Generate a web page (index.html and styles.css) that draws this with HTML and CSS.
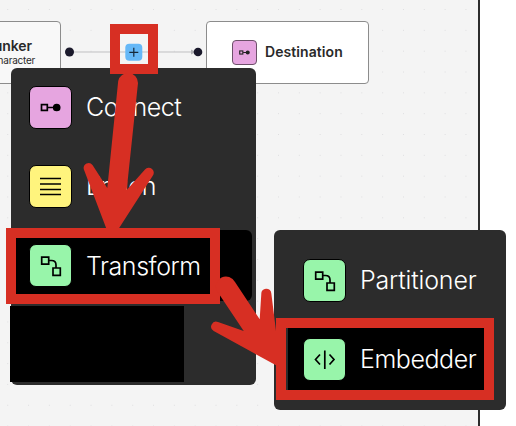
FILE: index.html
```html
<!DOCTYPE html>
<html lang="en">
<head>
<meta charset="utf-8">
<title>Workflow editor</title>
<link rel="stylesheet" href="styles.css">
</head>
<body>
<main class="screen">
  <section class="canvas">
    <div class="node chunker"><strong>unker</strong><span>haracter</span></div>
    <svg class="edge" width="140" height="20" viewBox="0 0 140 20">
      <path d="M8 10H130" stroke="#bfbfc1"/>
      <path d="M126 7.5L131 10L126 12.5Z" fill="#b4b4b7"/>
      <circle cx="4.5" cy="10" r="4.5" fill="#1a192b"/><circle cx="133" cy="10" r="4.3" fill="#1a192b"/>
      <rect x="60.3" y="1.8" width="17" height="17" rx="4" fill="#66b8f7"/>
      <path d="M64.3 10.3H73.3M68.8 5.8V14.8" stroke="#172a3a" stroke-width="1.2"/>
    </svg>
    <div class="node destination">
      <svg class="small-icon" viewBox="0 0 25 25" width="25" height="25">
        <g fill="none" stroke="#222" stroke-width="1.2"><rect x="7.3" y="10.8" width="3.4" height="3.4"/><path d="M11 12.5H15"/></g><circle cx="16" cy="12.5" r="2.2" fill="#222"/>
      </svg>
      <strong>Destination</strong>
    </div>
  </section>

  <nav class="menu primary">
    <div class="row">
      <svg class="icon pink" viewBox="0 0 41 41"><rect x="11.5" y="17.6" width="5.8" height="5.8"/><path d="M17 20.5H25"/><circle cx="26.7" cy="20.5" r="3" fill="#000"/></svg>
      <span class="connect">Connect</span>
    </div>
    <div class="row">
      <svg class="icon yellow" viewBox="0 0 41 41"><path d="M10 12.5H31M10 18H31M10 23.5H31M10 28.5H31"/></svg>
      <span class="enrich">Enrich</span>
    </div>
    <div class="row active">
      <svg class="icon green" viewBox="0 0 41 41"><path d="M11.7 12.2h7v7h-7zM23 23h7.3v7.3H23zM19 15.5h2.5q4.5 0 4.5 4.5v3"/></svg>
      <span class="transform">Transform</span>
    </div>
  </nav>
  <div class="redaction"></div>

  <nav class="menu secondary">
    <div class="row">
      <svg class="icon green" viewBox="0 0 41 41"><path d="M11.7 12.2h7v7h-7zM23 23h7.3v7.3H23zM19 15.5h2.5q4.5 0 4.5 4.5v3"/></svg>
      <span class="partitioner">Partitioner</span>
    </div>
    <div class="row active">
      <svg class="icon green" viewBox="0 0 41 41"><path d="M16 15.5L11.5 20.5L16 25.5M25.5 15.5L30 20.5L25.5 25.5M20.8 11.5V30"/></svg>
      <span class="embedder">Embedder</span>
    </div>
  </nav>

  <svg class="annotations" width="516" height="426" viewBox="0 0 516 426">
    <g fill="none" stroke="#d72f23" stroke-width="10">
      <rect x="115" y="29" width="38" height="40"/>
      <rect x="11" y="233" width="204" height="66"/>
      <rect x="281" y="323" width="208" height="72"/>
    </g>
    <g fill="#d72f23">
      <path d="M118.2 81A10 10 0 0 1 138 83L126.7 190L145 169.5A5 5 0 0 1 152.6 176L118.5 229H106.5L83.7 169A5 5 0 0 1 92.5 165L107.3 188Z"/>
      <path d="M217 291A10 10 0 0 1 235 282L259.7 319.3L261.3 294A5 5 0 0 1 271.3 293.3L276 331V365.3L213.7 331A5 5 0 0 1 218 322L243.7 331Z"/>
    </g>
  </svg>
</main>
</body>
</html>
```
FILE: styles.css
```css
* { box-sizing: border-box; }
body { margin: 0; background: #fff; font-family: Inter, "Liberation Sans", sans-serif; }
.screen { position: relative; width: 516px; height: 426px; overflow: hidden; }
.canvas {
  position: relative;
  width: 480px;
  height: 426px;
  border-right: 2px solid #2c2c2c;
  background-color: #f4f4f4;
  background-image: radial-gradient(circle, #dedee0 0.4px, transparent 1px);
  background-size: 20.83px 20.83px;
  background-position: -2.7px -0.9px;
}
.node { position: absolute; top: 21px; height: 62.5px; border: 1px solid #8c8c8c; border-radius: 4px; background: #fff; color: #292929; white-space: nowrap; }
.chunker { left: -10px; width: 71px; padding: 16px 25px 0 0; background: #f8f8f8; display: flex; flex-direction: column; align-items: flex-end; }
.chunker strong { font-size: 14px; line-height: 16px; font-weight: 600; margin-right: 3px; letter-spacing: -0.1px; }
.chunker span { font-size: 10px; line-height: 13px; letter-spacing: -0.25px; }
.destination { left: 206px; width: 163px; padding-left: 25px; display: flex; align-items: center; gap: 8px; }
.destination strong { position: relative; top: -1px; font-size: 14px; font-weight: 600; letter-spacing: 0.08px; }
.small-icon { background: #e6a5e0; border: 1px solid #6c5069; border-radius: 4px; }
.edge { position: absolute; left: 65px; top: 42px; }
.menu { position: absolute; display: flex; flex-direction: column; background: #2c2c2c; border-radius: 6px; color: #fff; }
.primary { left: 11px; top: 68px; width: 245px; height: 317px; padding: 3px 4px; gap: 6px; }
.row { display: flex; align-items: center; flex: none; height: 73px; padding-left: 14px; gap: 14px; border-radius: 6px; }
.row.active { background: #000; }
.primary .active { height: 71px; margin-top: 1px; }
.row span { font-size: 25px; line-height: 30px; font-weight: 300; letter-spacing: -0.44px; margin-top: -1px; white-space: nowrap; }
.row .enrich { letter-spacing: -0.6px; }
.row .transform { margin-top: 1px; }
.row .partitioner { letter-spacing: -0.17px; }
.icon { width: 43px; height: 43px; flex: none; border: 1px solid #000; border-radius: 7px; fill: none; stroke: #000; stroke-width: 1.7; }
.pink { background: #e6a5e0; }
.yellow { background: #fff47d; }
.green { background: #98f5aa; }
.redaction { position: absolute; left: 10px; top: 306px; width: 174px; height: 76px; background: #000; }
.secondary { left: 274px; top: 230px; width: 232px; height: 180px; padding: 14px 14px; gap: 6px; }
.secondary .row { padding-left: 15px; }
.secondary .active { width: 204px; border-radius: 0; }
.annotations { position: absolute; left: 0; top: 0; }
```
